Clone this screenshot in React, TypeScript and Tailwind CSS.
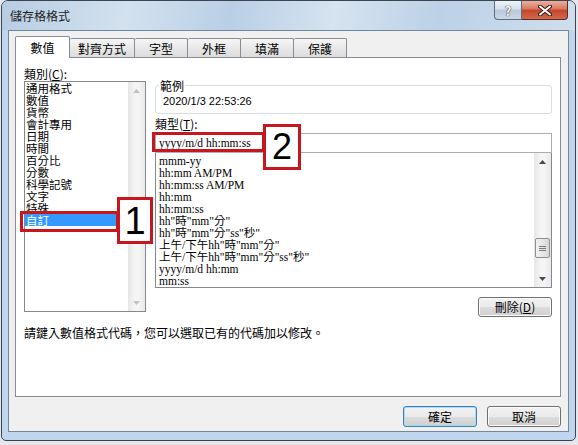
import React from "react";

// ─── Data ─────────────────────────────────────────────────────────────────────

const CATEGORIES = [
  "通用格式", "數值", "貨幣", "會計專用", "日期", "時間",
  "百分比", "分數", "科學記號", "文字", "特殊", "自訂",
];

const FORMATS = [
  "mmm-yy",
  "hh:mm AM/PM",
  "hh:mm:ss AM/PM",
  "hh:mm",
  "hh:mm:ss",
  'hh"時"mm"分"',
  'hh"時"mm"分"ss"秒"',
  '上午/下午hh"時"mm"分"',
  '上午/下午hh"時"mm"分"ss"秒"',
  "yyyy/m/d hh:mm",
  "mm:ss",
];

const TABS = [
  { label: "對齊方式", w: "w-[65px]" },
  { label: "字型", w: "w-[53px]" },
  { label: "外框", w: "w-[53px]" },
  { label: "填滿", w: "w-[53px]" },
  { label: "保護", w: "w-[53px]" },
];

const SERIF = "font-['Liberation_Serif','Noto_Sans_CJK_TC',serif]";

// ─── Small pieces ─────────────────────────────────────────────────────────────

function Arrow({ up, color }: { up?: boolean; color: string }) {
  return (
    <svg width="7" height="4" viewBox="0 0 7 4">
      <path d={up ? "M0 4 L3.5 0 L7 4 Z" : "M0 0 L3.5 4 L7 0 Z"} fill={color} />
    </svg>
  );
}

function ScrollBar({ thumbTop, disabled }: { thumbTop?: string; disabled?: boolean }) {
  const c = disabled ? "#c2c2c2" : "#4a4a4a";
  return (
    <div className="w-[17px] flex flex-col bg-[linear-gradient(90deg,#e6e6e6,#f5f5f5_40%,#f5f5f5_60%,#e9e9e9)]">
      <div className="h-[17px] flex items-center justify-center">
        <Arrow up color={c} />
      </div>
      <div className="flex-1">
        {thumbTop && (
          <div
            className={`${thumbTop} mx-px h-[20px] rounded-[2px] border border-[#8f8f8f] bg-[linear-gradient(90deg,#f3f3f3,#e6e6e6_50%,#d6d6d6)] flex flex-col items-center justify-center gap-[1px]`}
          >
            <div className="w-[7px] h-px bg-[#7a7a7a]" />
            <div className="w-[7px] h-px bg-[#7a7a7a]" />
            <div className="w-[7px] h-px bg-[#7a7a7a]" />
          </div>
        )}
      </div>
      <div className="h-[17px] flex items-center justify-center">
        <Arrow color={c} />
      </div>
    </div>
  );
}

function Button({ children, primary }: { children: React.ReactNode; primary?: boolean }) {
  return (
    <div
      className={`w-[74px] h-[21px] rounded-[3px] border flex items-center justify-center leading-none ${
        primary
          ? "border-[#3c7fb1] shadow-[inset_0_0_0_1px_#a6dcf6]"
          : "border-[#707070] shadow-[inset_0_0_0_1px_#fbfbfb]"
      } bg-[linear-gradient(180deg,#f2f2f2_0%,#ebebeb_50%,#dddddd_51%,#cfcfcf_100%)]`}
    >
      {children}
    </div>
  );
}

// ─── Main ─────────────────────────────────────────────────────────────────────

export default function App() {
  return (
    <div className="relative w-[578px] h-[445px] overflow-hidden bg-[#e4e7eb] text-[12px] text-black font-['Noto_Sans_CJK_TC',sans-serif]">
      {/* Window */}
      <div className="ml-px w-[575px] h-[441px] flex flex-col rounded-t-[7px] rounded-b-[5px] border border-[#3b4550] bg-[#c0d6ee]">
        {/* Title bar */}
        <div className="h-[29px] flex items-start rounded-t-[6px] bg-[linear-gradient(100deg,#b7cde4_0%,#d3e1ee_22%,#b9cfe6_40%,#d6e3f0_58%,#bcd1e7_76%,#cfdeed_100%)]">
          <span className="ml-[8px] mt-[7px] leading-[15px] text-[#1e1e1e]">儲存格格式</span>
          <div className="ml-auto mr-[7px] flex">
            <div className="w-[28px] h-[19px] rounded-bl-[4px] border border-t-0 border-[#5d6d80] bg-[linear-gradient(180deg,#eef3f8_0%,#d5e0eb_45%,#b9c9da_50%,#cbd8e6_100%)] flex items-center justify-center text-[13px] font-bold leading-none text-[#f8f8f8] [text-shadow:0_0_1px_#333,0_0_1px_#333]">
              ?
            </div>
            <div className="w-[46px] h-[19px] rounded-br-[4px] border border-t-0 border-l-0 border-[#5a2a22] bg-[linear-gradient(180deg,#eab0a1_0%,#d8775e_45%,#c54329_50%,#d36a4e_100%)] flex items-center justify-center">
              <svg width="14" height="11" viewBox="0 0 14 11">
                <path d="M2 1.5 L12 9.5 M12 1.5 L2 9.5" stroke="#3b1a14" strokeWidth="4" strokeLinecap="round" />
                <path d="M2 1.5 L12 9.5 M12 1.5 L2 9.5" stroke="#ffffff" strokeWidth="2" strokeLinecap="round" />
              </svg>
            </div>
          </div>
        </div>

        {/* Client area */}
        <div className="mx-[6px] h-[402px] border border-[#71879d] bg-[#f0f0f0] flex flex-col pl-[6px] pt-[5px]">
          {/* Tabs */}
          <div className="relative z-10 flex items-end h-[21px]">
            <div className="w-[55px] h-[22px] -mb-px bg-white border border-b-0 border-[#898c95] rounded-t-[2px] flex items-center justify-center">
              數值
            </div>
            {TABS.map((t) => (
              <div
                key={t.label}
                className={`${t.w} h-[19px] pt-[1px] border border-b-0 border-l-0 border-[#898c95] rounded-t-[2px] bg-[linear-gradient(180deg,#f6f6f6,#e8e8e8_50%,#dcdcdc)] flex items-center justify-center leading-none`}
              >
                {t.label}
              </div>
            ))}
          </div>

          {/* Panel */}
          <div className="w-[546px] h-[340px] bg-white border border-[#898c95] pl-[8px] pt-[8px] flex flex-col">
            <div className="flex items-start">
              {/* Category column */}
              <div className="w-[122px] flex flex-col">
                <div className="h-[15px] leading-[15px]">
                  類別(<span className="underline">C</span>):
                </div>
                <div className="h-[231px] border border-[#828790] flex">
                  <div className="flex-1 flex flex-col text-[11.5px]">
                    {CATEGORIES.map((c, i) => (
                      <div
                        key={c}
                        className={`h-[12px] leading-[12px] pl-[1px] ${
                          i === CATEGORIES.length - 1 ? "bg-[#3399ff] text-white" : ""
                        }`}
                      >
                        {c}
                      </div>
                    ))}
                  </div>
                  <ScrollBar disabled />
                </div>
              </div>

              {/* Format column */}
              <div className="ml-[9px] mt-[12px] w-[397px] flex flex-col">
                <fieldset className="h-[36px] border border-[#d5dfe5] rounded-[3px]">
                  <legend className="ml-[3px] px-[1px] leading-[15px]">範例</legend>
                  <div className="pl-[7px] pt-[1px] leading-[15px] text-[11px] font-['Liberation_Sans',sans-serif]">
                    2020/1/3 22:53:26
                  </div>
                </fieldset>
                <div className="h-[19px] pt-[2px] leading-[15px]">
                  類型(<span className="underline">T</span>):
                </div>
                <div className={`h-[20px] border border-[#abadb3] pl-[3px] leading-[18px] text-[11.5px] ${SERIF}`}>
                  yyyy/m/d hh:mm:ss
                </div>
                <div className="h-[135px] border border-t-0 border-[#828790] flex">
                  <div className={`flex-1 pt-[2px] pl-[3px] text-[11.5px] ${SERIF}`}>
                    {FORMATS.map((f) => (
                      <div key={f} className="h-[12px] leading-[12px] whitespace-nowrap">
                        {f}
                      </div>
                    ))}
                  </div>
                  <ScrollBar thumbTop="mt-[68px]" />
                </div>
                <div className="mt-[9px] self-end">
                  <div className="w-[74px] h-[20px] rounded-[3px] border border-[#707070] shadow-[inset_0_0_0_1px_#fbfbfb] bg-[linear-gradient(180deg,#f2f2f2_0%,#ebebeb_50%,#dddddd_51%,#cfcfcf_100%)] flex items-center justify-center leading-none">
                    刪除(<span className="underline">D</span>)
                  </div>
                </div>
              </div>
            </div>

            <div className="mt-[8px] leading-[15px]">
              請鍵入數值格式代碼，您可以選取已有的代碼加以修改。
            </div>
          </div>

          {/* Dialog buttons */}
          <div className="w-[546px] mt-[9px] flex justify-end gap-[10px]">
            <Button primary>確定</Button>
            <Button>取消</Button>
          </div>
        </div>
      </div>

      {/* Annotations */}
      <div className="absolute left-[20px] top-[211px] w-[99px] h-[21px] border-[3px] border-[#c8161e]" />
      <div className="absolute left-[117px] top-[197px] w-[36px] h-[47px] border-[3px] border-[#c8161e] bg-white flex items-center justify-center text-[38px] leading-none font-['Liberation_Sans',sans-serif]">
        1
      </div>
      <div className="absolute left-[152px] top-[132px] w-[113px] h-[20px] border-[3px] border-[#c8161e]" />
      <div className="absolute left-[263px] top-[124px] w-[38px] h-[46px] border-[3px] border-[#c8161e] bg-white flex items-center justify-center text-[36px] leading-none font-['Liberation_Sans',sans-serif]">
        2
      </div>
    </div>
  );
}
